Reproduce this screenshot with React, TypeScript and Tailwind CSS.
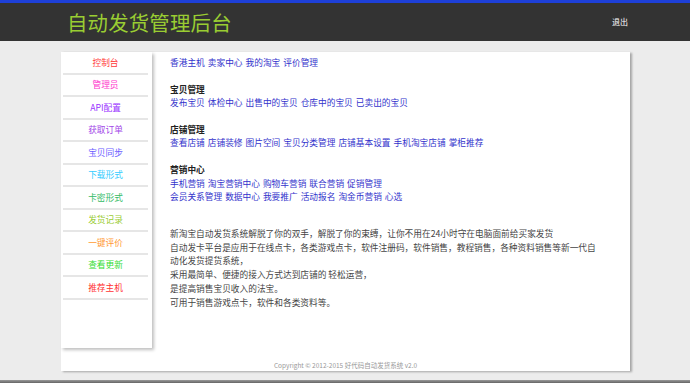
const font = { fontFamily: '"Noto Sans CJK SC", "Liberation Sans", sans-serif' };

const menu = [
  { name: '控制台', color: 'text-[#ff3a3a]' },
  { name: '管理员', color: 'text-[#ff33cc]' },
  { name: 'API配置', color: 'text-[#9933ff]' },
  { name: '获取订单', color: 'text-[#a347e8]' },
  { name: '宝贝同步', color: 'text-[#6a5cff]' },
  { name: '下载形式', color: 'text-[#33ccff]' },
  { name: '卡密形式', color: 'text-[#33bb66]' },
  { name: '发货记录', color: 'text-[#99cc33]' },
  { name: '一键评价', color: 'text-[#ff9933]' },
  { name: '查看更新', color: 'text-[#33dd33]' },
  { name: '推荐主机', color: 'text-[#ff3333]' }
];

const sections = [
  { title: '宝贝管理', lines: [['发布宝贝', '体检中心', '出售中的宝贝', '仓库中的宝贝', '已卖出的宝贝']] },
  { title: '店铺管理', lines: [['查看店铺', '店铺装修', '图片空间', '宝贝分类管理', '店铺基本设置', '手机淘宝店铺', '掌柜推荐']] },
  {
    title: '营销中心',
    lines: [
      ['手机营销', '淘宝营销中心', '购物车营销', '联合营销', '促销管理'],
      ['会员关系管理', '数据中心', '我要推广', '活动报名', '淘金币营销', '心选']
    ]
  }
];

function Links({ items }: { items: string[] }) {
  return (
    <div className="flex gap-x-[3px] whitespace-nowrap">
      {items.map((t, i) => (
        <a key={i} className="text-[#3333cc]">{t}</a>
      ))}
    </div>
  );
}

export default function App() {
  return (
    <div className="w-[690px] h-[383px] overflow-hidden bg-[#ececec]" style={font}>
      <div className="h-[41px] bg-[#333333] border-t-[3px] border-[#1e40d8] flex items-center">
        <div className="ml-[67px] text-[20.4px] leading-none text-[#9acd32] tracking-[0.2px]">自动发货管理后台</div>
        <div className="ml-auto mr-[62px] text-[8px] text-white">退出</div>
      </div>

      <div className="pt-[11px] pl-[61px]">
        <div className="w-[569px] h-[319px] bg-white shadow-[2px_1px_2px_rgba(0,0,0,0.3)] flex flex-col">
          <div className="flex flex-1">
            <div className="w-[91px] h-[296px] shrink-0 bg-white shadow-[2px_2px_3px_rgba(0,0,0,0.25)]">
              {menu.map((m, i) => (
                <div key={i} className="mx-[2px] mr-[4px] h-[22.5px] border-b-2 border-[#e6e6e6] flex items-center justify-center">
                  <span className={`text-[8.7px] ${m.color}`}>{m.name}</span>
                </div>
              ))}
            </div>

            <div className="ml-[18px] pt-[4px] w-[432px] text-[8.7px] leading-[13.6px] text-[#333]">
              <Links items={['香港主机', '卖家中心', '我的淘宝', '评价管理']} />
              {sections.map((s, i) => (
                <div key={i} className="mt-[13px]">
                  <div className="font-bold text-[#222]">{s.title}</div>
                  {s.lines.map((l, j) => (
                    <Links key={j} items={l} />
                  ))}
                </div>
              ))}
              <div className="mt-[23px] leading-[13.8px] text-[#444]">
                <p>新淘宝自动发货系统解脱了你的双手，解脱了你的束缚，让你不用在24小时守在电脑面前给买家发货</p>
                <p>自动发卡平台是应用于在线点卡，各类游戏点卡，软件注册码，软件销售，教程销售，各种资料销售等新一代自动化发货提货系统，</p>
                <p>采用最简单、便捷的接入方式达到店铺的 轻松运营，</p>
                <p>是提高销售宝贝收入的法宝。</p>
                <p>可用于销售游戏点卡，软件和各类资料等。</p>
              </div>
            </div>
          </div>
          <div className="text-center text-[6.5px] leading-[12px] text-[#999]">Copyright © 2012-2015 好代码自动发货系统 v2.0</div>
        </div>
      </div>

      <div className="mt-[9px] h-[4px] bg-gradient-to-b from-[#999] to-[#555]" />
    </div>
  );
}
